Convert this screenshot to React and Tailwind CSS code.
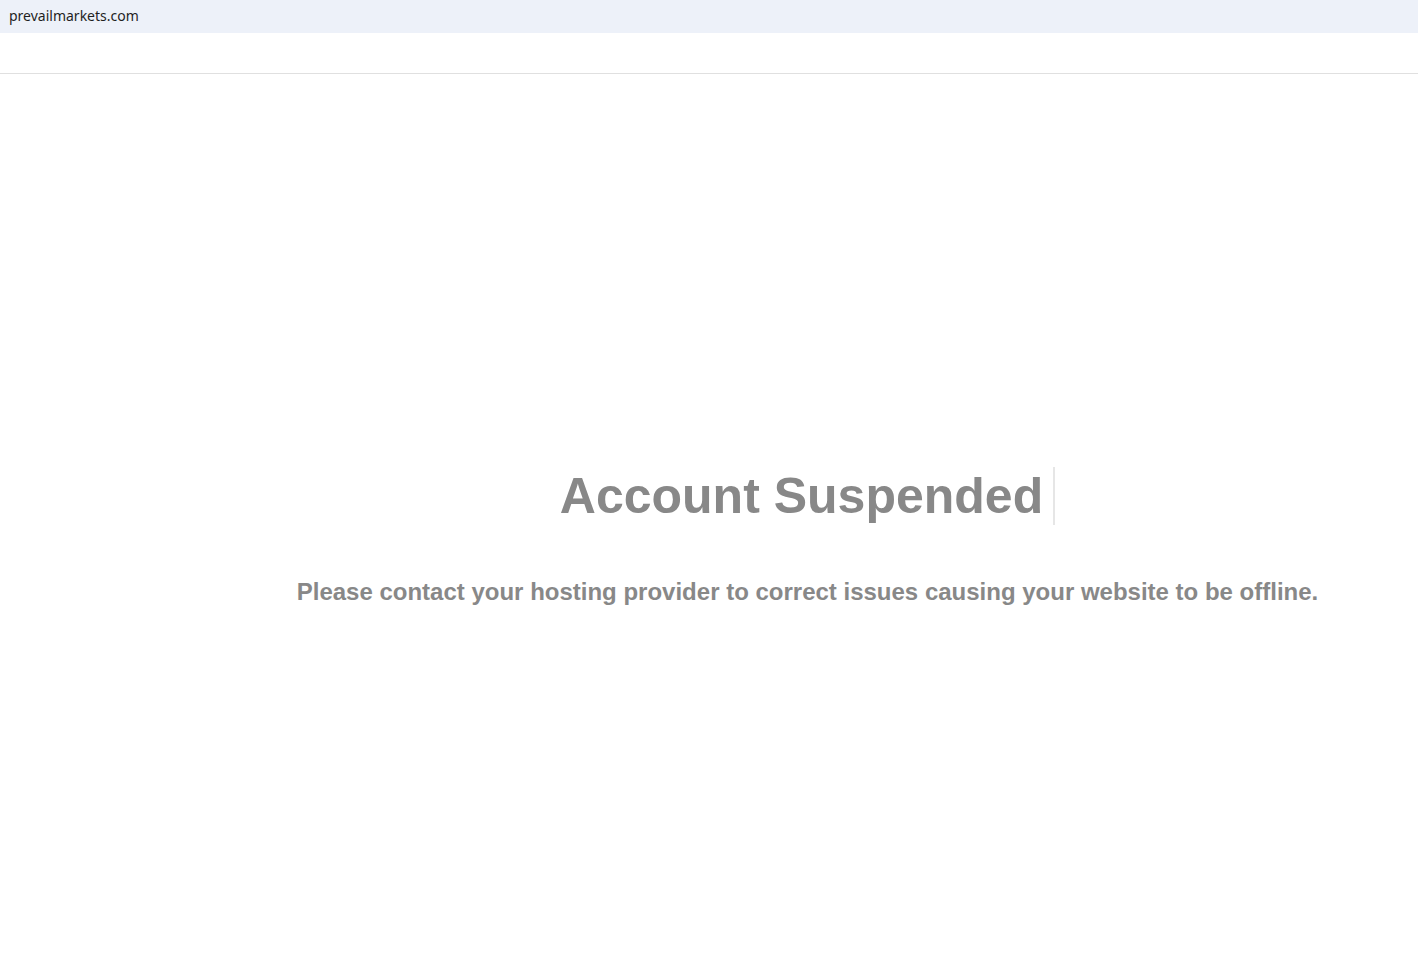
export default function App() {
  return (
    <div className="min-h-[973px] bg-white" style={{ fontFamily: '"Liberation Sans", Arial, sans-serif' }}>
      {/* Address strip */}
      <div className="h-[33px] bg-[#edf1f9] flex items-center pl-[9px] pb-[2px]">
        <span className="text-[14px] text-[#1f1f1f]" style={{ fontFamily: '"Noto Sans", "Open Sans", sans-serif' }}>
          prevailmarkets.com
        </span>
      </div>

      {/* Empty header */}
      <div className="h-[41px] border-b border-[#e0e0e0]" />

      {/* Message */}
      <div className="flex flex-col items-center pl-[197px] pt-[393px]">
        <h1 className="text-[50px] leading-[58px] font-bold text-[#888888] border-r-2 border-[#e6e6e6] pr-[10px]">
          Account Suspended
        </h1>
        <p className="mt-[53px] text-[24px] leading-[28px] font-bold text-[#888888]">
          Please contact your hosting provider to correct issues causing your website to be offline.
        </p>
      </div>
    </div>
  );
}
